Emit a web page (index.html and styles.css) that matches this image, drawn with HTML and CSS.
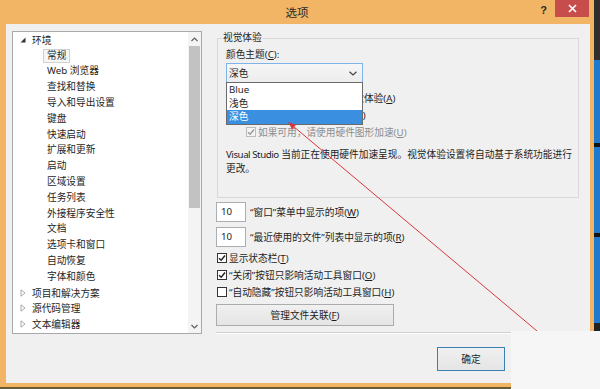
FILE: index.html
```html
<!DOCTYPE html>
<html lang="zh-CN">
<head>
<meta charset="utf-8">
<title>选项</title>
<link rel="stylesheet" href="styles.css">
</head>
<body>
<div class="screen">
  <div class="window">
    <div class="titlebar">
      <span></span>
      <span class="title">选项</span>
      <div class="controls">
        <span class="help">?</span>
        <span class="close"><svg width="9" height="9" viewBox="0 0 9 9"><path d="M1 1L8 8M8 1L1 8" stroke="#fff" stroke-width="1.6"/></svg></span>
      </div>
    </div>
    <div class="client">
      <div class="main">
        <div class="tree">
          <div class="tree-list">
            <div class="row top"><svg class="tog" width="6" height="6" viewBox="0 0 6 6"><path d="M5.5 0.5V5.5H0.5Z" fill="#333"/></svg><span>环境</span></div>
            <div class="row child"><span class="sel">常规</span></div>
            <div class="row child"><span>Web 浏览器</span></div>
            <div class="row child"><span>查找和替换</span></div>
            <div class="row child"><span>导入和导出设置</span></div>
            <div class="row child"><span>键盘</span></div>
            <div class="row child"><span>快速启动</span></div>
            <div class="row child"><span>扩展和更新</span></div>
            <div class="row child"><span>启动</span></div>
            <div class="row child"><span>区域设置</span></div>
            <div class="row child"><span>任务列表</span></div>
            <div class="row child"><span>外接程序安全性</span></div>
            <div class="row child"><span>文档</span></div>
            <div class="row child"><span>选项卡和窗口</span></div>
            <div class="row child"><span>自动恢复</span></div>
            <div class="row child"><span>字体和颜色</span></div>
            <div class="row top"><svg class="tog" width="6" height="8" viewBox="0 0 6 8"><path d="M1 0.8L5 4L1 7.2Z" fill="none" stroke="#a8a8a8" stroke-width="1"/></svg><span>项目和解决方案</span></div>
            <div class="row top"><svg class="tog" width="6" height="8" viewBox="0 0 6 8"><path d="M1 0.8L5 4L1 7.2Z" fill="none" stroke="#a8a8a8" stroke-width="1"/></svg><span>源代码管理</span></div>
            <div class="row top"><svg class="tog" width="6" height="8" viewBox="0 0 6 8"><path d="M1 0.8L5 4L1 7.2Z" fill="none" stroke="#a8a8a8" stroke-width="1"/></svg><span>文本编辑器</span></div>
          </div>
          <div class="scrollbar">
            <div class="sb-btn"><svg width="7" height="5" viewBox="0 0 7 5"><path d="M0.5 4L3.5 1L6.5 4" fill="none" stroke="#606060" stroke-width="1.2"/></svg></div>
            <div class="sb-track"><div class="sb-thumb"></div></div>
            <div class="sb-btn"><svg width="7" height="5" viewBox="0 0 7 5"><path d="M0.5 1L3.5 4L6.5 1" fill="none" stroke="#606060" stroke-width="1.2"/></svg></div>
          </div>
        </div>
        <div class="panel">
          <fieldset class="group">
            <legend>视觉体验</legend>
            <div class="field-label">颜色主题(<u>C</u>):</div>
            <div class="combo-wrap">
              <div class="combo"><span>深色</span><svg width="8" height="5" viewBox="0 0 8 5"><path d="M0.5 0.8L4 4L7.5 0.8" fill="none" stroke="#444" stroke-width="1.2"/></svg></div>
              <div class="droplist">
                <div class="opt">Blue</div>
                <div class="opt">浅色</div>
                <div class="opt active">深色</div>
              </div>
            </div>
            <div class="check lvl0"><span class="box"></span><span>基于客户端性能自动调整视觉体验(<u>A</u>)</span></div>
            <div class="check lvl1"><span class="box"></span><span>启用丰富客户端视觉体验(<u>E</u>)</span></div>
            <div class="check lvl2 disabled"><span class="box on"><svg width="8" height="8" viewBox="0 0 8 8"><path d="M1 4.2L3.2 6.3L7 1.5" fill="none" stroke="#9a9a9a" stroke-width="1.4"/></svg></span><span>如果可用，请使用硬件图形加速(<u>U</u>)</span></div>
            <p class="note"><span class="latin">Visual Studio</span> 当前正在使用硬件加速呈现。视觉体验设置将自动基于系统功能进行<br>更改。</p>
          </fieldset>
          <div class="num-row first"><span class="num">10</span><span>“窗口”菜单中显示的项(<u>W</u>)</span></div>
          <div class="num-row"><span class="num">10</span><span>“最近使用的文件”列表中显示的项(<u>R</u>)</span></div>
          <div class="check plain first"><span class="box on"><svg width="8" height="8" viewBox="0 0 8 8"><path d="M1 4.2L3.2 6.3L7 1.5" fill="none" stroke="#222" stroke-width="1.4"/></svg></span><span>显示状态栏(<u>T</u>)</span></div>
          <div class="check plain"><span class="box on"><svg width="8" height="8" viewBox="0 0 8 8"><path d="M1 4.2L3.2 6.3L7 1.5" fill="none" stroke="#222" stroke-width="1.4"/></svg></span><span>“关闭”按钮只影响活动工具窗口(<u>O</u>)</span></div>
          <div class="check plain"><span class="box"></span><span>“自动隐藏”按钮只影响活动工具窗口(<u>H</u>)</span></div>
          <div class="btn assoc">管理文件关联(<u>F</u>)</div>
          <div class="sep"></div>
        </div>
      </div>
      <div class="footer">
        <div class="btn ok">确定</div>
      </div>
    </div>
    <div class="base"></div>
  </div>
  <div class="desktop">
    <div class="d1"></div>
    <div class="d2"></div>
    <div class="d3"></div>
    <div class="d2 tall"></div>
    <div class="d3"></div>
    <div class="d2 tall"></div>
    <div class="d4"></div>
  </div>
  <svg class="arrow" width="600" height="389" viewBox="0 0 600 389">
    <line x1="537" y1="331" x2="293" y2="126" stroke="#d8373b" stroke-width="1"/>
    <polygon points="288,122 296,124.8 292.2,129.4" fill="#d8373b"/>
  </svg>
  <div class="cover"></div>
</div>
</body>
</html>
```
FILE: styles.css
```css
* { box-sizing: border-box; }
html, body { margin: 0; padding: 0; }
body {
  width: 600px;
  height: 389px;
  overflow: hidden;
  font-family: "Noto Sans", "Noto Sans CJK SC", sans-serif;
  font-size: 9.7px;
  color: #1e1e1e;
  background: #1f7acb;
}
u { text-decoration: underline; text-underline-offset: 1px; }

.screen { position: relative; display: flex; width: 600px; height: 389px; }

.window {
  width: 594px;
  height: 389px;
  background: #f1b565;
  display: flex;
  flex-direction: column;
  padding: 0 4px 0 6px;
}

.titlebar {
  margin: 0 -4px 0 -6px;
  height: 24px;
  display: grid;
  grid-template-columns: 1fr auto 1fr;
  align-items: start;
}
.title {
  font-size: 11.5px;
  line-height: 14px;
  padding-top: 6px;
  color: #2a2a2a;
}
.controls { justify-self: end; display: flex; align-items: flex-start; }
.help {
  font-family: "Liberation Sans", sans-serif;
  font-weight: bold;
  font-size: 11px;
  line-height: 12px;
  padding-top: 4px;
  margin-right: 8px;
  color: #2a2a2a;
}
.close {
  width: 34px;
  height: 17px;
  background: #c74d4d;
  margin-right: 5px;
  display: flex;
  align-items: center;
  justify-content: center;
}

.client {
  height: 359px;
  background: #f0f0f0;
  display: flex;
  flex-direction: column;
  padding: 7px 11px 0 6px;
}
.base { margin: 4px -4px 0 -6px; height: 2px; background: #6b5a34; }

.main { display: flex; gap: 14px; }

.tree {
  width: 190px;
  height: 303px;
  border: 1px solid #a9a9a9;
  background: #fff;
  display: flex;
}
.tree-list { flex: 1; }
.row { height: 15.8px; display: flex; align-items: center; white-space: nowrap; }
.row.top { padding-left: 7px; }
.tog { margin-right: 6px; flex: none; }
.row.child { padding-left: 30px; }
.row.child span {
  display: inline-block;
  line-height: 12px;
  padding: 0 3px;
  border: 1px solid transparent;
}
.row.child span.sel { border-color: #d0d0d0; background: #f6f6f6; }

.scrollbar { width: 13px; display: flex; flex-direction: column; background: #f4f4f4; }
.sb-btn { height: 14px; display: flex; align-items: center; justify-content: center; }
.sb-track { flex: 1; padding: 0 1px; }
.sb-thumb { height: 162px; background: #c2c2c2; }

.panel { width: 363px; display: flex; flex-direction: column; }

.group {
  margin: 0 0 0 1px;
  border: 1px solid #d8d8d8;
  padding: 3px 7px 21px 8px;
  min-width: 0;
}
.group legend {
  line-height: 14px;
  padding: 0 1px;
  margin-left: -4px;
}
.field-label { line-height: 14px; }

.combo-wrap { position: relative; margin-top: 1px; width: 137px; }
.combo {
  height: 20px;
  border: 1px solid #7eb4ea;
  background: linear-gradient(#f6f6f6, #ececec);
  display: flex;
  align-items: center;
  justify-content: space-between;
  padding: 0 5px 0 2px;
}
.droplist {
  position: absolute;
  left: 0;
  top: 19px;
  width: 137px;
  border: 1px solid #6a6a6a;
  background: #fff;
  z-index: 2;
}
.opt { height: 13.5px; line-height: 13.5px; padding-left: 2px; }
.opt.active { background: #3b8fe0; color: #fff; }

.check { height: 17px; display: flex; align-items: center; white-space: nowrap; }
.check .box {
  width: 10px;
  height: 10px;
  border: 1px solid #333;
  background: #fff;
  margin-right: 2px;
  flex: none;
  display: flex;
  align-items: center;
  justify-content: center;
}
.check.lvl0 { margin-top: 6px; }
.check.lvl1 { padding-left: 10px; }
.check.lvl2 { padding-left: 20px; }
.check.disabled { color: #8d8d8d; }
.check.disabled .box { border-color: #bcbcbc; background: #f4f4f4; }
.note { margin: 8px 0 0; line-height: 14px; white-space: nowrap; }
.note .latin { letter-spacing: -0.45px; }

.num-row { display: flex; align-items: center; gap: 4px; margin-top: 5px; white-space: nowrap; }
.num-row.first { margin-top: 4px; }
.num {
  width: 30px;
  height: 20px;
  border: 1px solid #abadb3;
  background: #fff;
  line-height: 18px;
  padding-left: 4px;
}
.check.plain { padding-left: 1px; }
.check.plain.first { margin-top: 2px; }

.btn {
  border: 1px solid #acacac;
  background: linear-gradient(#f0f0f0, #e5e5e5);
  display: flex;
  align-items: center;
  justify-content: center;
}
.assoc { width: 178px; height: 22px; margin-top: 4px; }
.sep { margin-top: 6px; height: 2px; border-top: 1px solid #d0d0d0; border-bottom: 1px solid #fff; }

.footer { display: flex; justify-content: flex-end; padding-right: 74px; margin-top: 13px; }
.ok { width: 68px; height: 24px; border-color: #3c7fb1; }

.desktop { flex: 1; display: flex; flex-direction: column; }
.d1 { height: 60px; background: #2f2f2d; }
.d2 { height: 83px; background: #1f7acb; }
.d2.tall { height: 86px; }
.d3 { height: 4px; background: #141414; }
.d4 { flex: 1; background: #222; }

.arrow { position: absolute; left: 0; top: 0; pointer-events: none; z-index: 3; }
.cover {
  position: absolute;
  left: 511px;
  top: 331px;
  width: 89px;
  height: 58px;
  background: #f6f6f6;
  z-index: 4;
}
```
